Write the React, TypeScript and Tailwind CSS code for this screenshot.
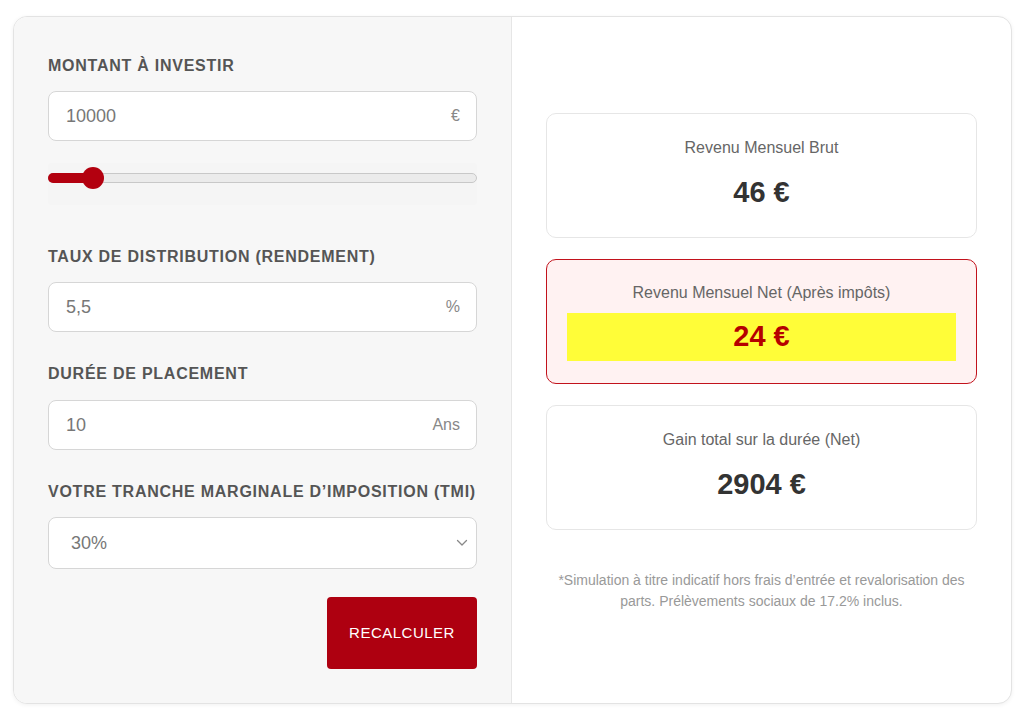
import React from "react";

const font = { fontFamily: '"Liberation Sans", Arial, Helvetica, sans-serif' };

function Label({ children }: { children: React.ReactNode }) {
  return (
    <div className="h-5 text-[16px] leading-5 font-bold uppercase tracking-[0.75px] text-[#555555] whitespace-nowrap">
      {children}
    </div>
  );
}

function Field({ value, unit }: { value: string; unit: string }) {
  return (
    <div className="flex h-[50px] items-center justify-between rounded-[8px] border border-[#d6d6d6] bg-white pl-[17px] pr-[16px]">
      <span className="text-[18px] text-[#777777]">{value}</span>
      <span className="text-[16px] text-[#888888]">{unit}</span>
    </div>
  );
}

function Card({ title, value }: { title: string; value: string }) {
  return (
    <div className="flex h-[125px] flex-col items-center rounded-[10px] border border-[#e6e6e6] bg-white pt-[24px]">
      <div className="h-5 text-[16px] leading-5 text-[#666666]">{title}</div>
      <div className="mt-[17px] h-[34px] text-[29px] font-bold leading-[34px] text-[#333333]">{value}</div>
    </div>
  );
}

export default function App() {
  return (
    <div className="min-h-[716px] w-[1024px] bg-white pt-[16px] pl-[13px]" style={font}>
      <div className="flex h-[688px] w-[999px] overflow-hidden rounded-[14px] border border-[#e3e3e3] bg-white shadow-[0_1px_4px_rgba(0,0,0,0.06)]">
        {/* Left panel */}
        <div className="flex w-[498px] flex-col border-r border-[#e6e6e6] bg-[#f7f7f7] px-[34px] pt-[39px]">
          <Label>Montant à investir</Label>
          <div className="mt-[15px]">
            <Field value="10000" unit="€" />
          </div>
          <div className="mt-[22px] flex h-[42px] items-start rounded-[4px] bg-[#f5f5f5] pt-[4px]">
            <div className="relative h-[22px] w-full">
              <div className="absolute left-0 right-0 top-[6px] h-[10px] rounded-full border border-[#c8c8c8] bg-[#ebebeb]" />
              <div className="absolute left-0 top-[6px] h-[10px] w-[46px] rounded-full bg-[#b3000f]" />
              <div className="absolute left-[34px] top-0 h-[22px] w-[22px] rounded-full bg-[#b3000f]" />
            </div>
          </div>
          <div className="mt-[42px]">
            <Label>Taux de distribution (rendement)</Label>
          </div>
          <div className="mt-[15px]">
            <Field value="5,5" unit="%" />
          </div>
          <div className="mt-[32px]">
            <Label>Durée de placement</Label>
          </div>
          <div className="mt-[16px]">
            <Field value="10" unit="Ans" />
          </div>
          <div className="mt-[32px]">
            <Label>Votre tranche marginale d’imposition (TMI)</Label>
          </div>
          <div className="mt-[15px] flex h-[52px] items-center justify-between rounded-[8px] border border-[#d6d6d6] bg-white pl-[22px] pr-[8px]">
            <span className="text-[18px] text-[#777777]">30%</span>
            <svg width="12" height="8" viewBox="0 0 12 8" fill="none">
              <path d="M1.5 1.5 L6 6 L10.5 1.5" stroke="#888" strokeWidth="1.3" strokeLinecap="round" strokeLinejoin="round" />
            </svg>
          </div>
          <div className="mt-[28px] flex justify-end">
            <button className="h-[72px] w-[150px] rounded-[4px] bg-[#ae0010] text-[15px] tracking-[0.5px] text-white">
              RECALCULER
            </button>
          </div>
        </div>

        {/* Right panel */}
        <div className="flex flex-1 flex-col justify-center px-[34px] pt-[4px]">
          <Card title="Revenu Mensuel Brut" value="46 €" />
          <div className="mt-[21px] flex h-[125px] flex-col items-center rounded-[10px] border-[1.5px] border-[#c2121c] bg-[#fff2f2] px-[20px] pt-[23px]">
            <div className="h-5 text-[16px] leading-5 text-[#666666]">Revenu Mensuel Net (Après impôts)</div>
            <div className="mt-[10px] flex h-[48px] w-full items-center justify-center bg-[#fffd38] text-[29px] font-bold text-[#b50000]">
              24 €
            </div>
          </div>
          <div className="mt-[21px]">
            <Card title="Gain total sur la durée (Net)" value="2904 €" />
          </div>
          <p className="mt-[40px] px-0 text-center text-[14px] leading-[21px] text-[#999999]">
            *Simulation à titre indicatif hors frais d’entrée et revalorisation des parts. Prélèvements sociaux de 17.2% inclus.
          </p>
        </div>
      </div>
    </div>
  );
}
